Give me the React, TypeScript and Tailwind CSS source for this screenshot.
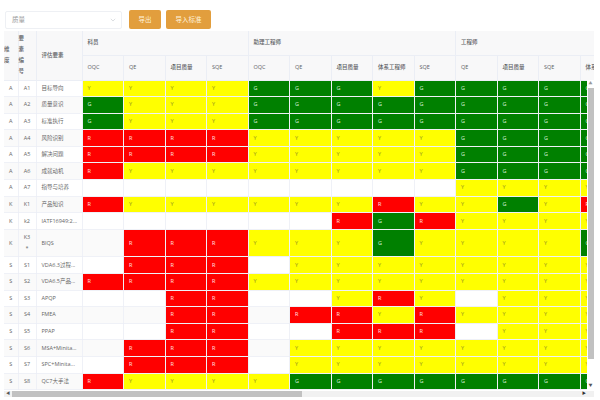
const groups = [
  { name: "科员", cols: ["OQC", "QE", "项目质量", "SQE"] },
  { name: "助理工程师", cols: ["OQC", "QE", "项目质量", "体系工程师", "SQE"] },
  { name: "工程师", cols: ["QE", "项目质量", "SQE", "体系工程师"] },
];

const rows: [string, string, string, string][] = [
  ["A", "A1", "目标导向", "YYYYGGGYGGGGG"],
  ["A", "A2", "质量意识", "GYYYGGGGGGGGG"],
  ["A", "A3", "标准执行", "GYYYGGGGGGGGG"],
  ["A", "A4", "风险识别", "RRRRYYYYYGGGG"],
  ["A", "A5", "解决问题", "RRRRYYYYYGGGG"],
  ["A", "A6", "成就动机", "RYYYYYYYYGGGG"],
  ["A", "A7", "指导与培养", "---------YYYY"],
  ["K", "K1", "产品知识", "RYYYYYYRYYGYR"],
  ["K", "k2", "IATF16949:2...", "------RGRYYYY"],
  ["K", "K3 *", "BIQS", "-RRRYYYGYYYYG"],
  ["S", "S1", "VDA6.3过程...", "-RRR-YYYYYYYY"],
  ["S", "S2", "VDA6.5产品...", "RRRRYYYYYYYYY"],
  ["S", "S3", "APQP", "--RR--YRY-YYY"],
  ["S", "S4", "FMEA", "--RR-RRYRYYYY"],
  ["S", "S5", "PPAP", "--RR--RRR-YYY"],
  ["S", "S6", "MSA+Minita...", "-RRR-YYYYYYYY"],
  ["S", "S7", "SPC+Minita...", "-RRR-YYYYYYYY"],
  ["S", "S8", "QC7大手法", "RYYYYGGGGGGGG"],
];

function cellClass(v: string, i: number) {
  if (v === "R") return "bg-[#ff0000] text-[#ffe0e0]";
  if (v === "G") return "bg-[#008000] text-[#d8efd8]";
  if (v === "Y") return "bg-[#ffff00] text-[#8f8f20]";
  return i % 2 === 1 ? "bg-[#fafafa]" : "bg-white";
}

const th = "border-r border-b border-[#ebeef5] bg-[#f8f8f9] text-left align-middle font-medium text-[#606266] p-0";
const td = "border-r border-b border-[#ebeef5]/80 p-0 pl-[5px] overflow-hidden whitespace-nowrap";

export default function App() {
  return (
    <div className="w-[600px] h-[400px] overflow-hidden bg-white text-[5.5px] leading-[11px] text-[#666] font-['Open_Sans','Noto_Sans_CJK_SC',sans-serif]">
      <div className="flex items-center gap-[5px] pl-[5px] pt-[8px] h-[31px]">
        <div className="flex items-center justify-between w-[117px] h-[18px] border border-[#eef0f4] rounded-[2px] pl-[6px] pr-[5px] text-[6.5px] text-[#999]">
          <span>质量</span>
          <svg width="6" height="4" viewBox="0 0 7 5" fill="none" stroke="#c8ccd2" strokeWidth="0.8"><path d="M0.8 1 L3.5 3.8 L6.2 1" /></svg>
        </div>
        <div className="flex items-center justify-center w-[32px] h-[19px] ml-[2px] rounded-[2px] bg-[#e29e3d] text-[6.5px] text-[#fff3dc]">导出</div>
        <div className="flex items-center justify-center w-[45px] h-[19px] rounded-[2px] bg-[#e29e3d] text-[6.5px] text-[#fff3dc]">导入标准</div>
      </div>
      <div className="relative ml-[4px] w-[590px] h-[366px] overflow-hidden">
        <table className="table-fixed border-collapse w-[617.5px]">
          <colgroup>
            <col className="w-[14px]" />
            <col className="w-[18px]" />
            <col className="w-[46px]" />
            {Array.from({ length: 13 }).map((_, i) => (
              <col key={i} className="w-[41.5px]" />
            ))}
          </colgroup>
          <thead>
            <tr className="h-[24px]">
              <th rowSpan={2} className={`${th} text-center`}>维<br />度</th>
              <th rowSpan={2} className={`${th} text-center`}>要<br />素<br />编<br />号</th>
              <th rowSpan={2} className={`${th} pl-[5px]`}>评估要素</th>
              {groups.map((g) => (
                <th key={g.name} colSpan={g.cols.length} className={`${th} pl-[5px]`}>{g.name}</th>
              ))}
            </tr>
            <tr className="h-[25px]">
              {groups.flatMap((g) =>
                g.cols.map((c, i) => (
                  <th key={g.name + i} className={`${th} pl-[5px] whitespace-nowrap overflow-hidden`}>{c}</th>
                ))
              )}
            </tr>
          </thead>
          <tbody>
            {rows.map((r, i) => (
              <tr key={r[1]} className={r[1] === "K3 *" ? "h-[27.5px]" : "h-[16.6px]"}>
                <td className={`${td} text-center !pl-0 ${i % 2 ? "bg-[#fafafa]" : "bg-white"}`}>{r[0]}</td>
                <td className={`${td} text-center !pl-0 ${i % 2 ? "bg-[#fafafa]" : "bg-white"}`}>
                  {r[1] === "K3 *" ? <>K3<br />*</> : r[1]}
                </td>
                <td className={`${td} ${i % 2 ? "bg-[#fafafa]" : "bg-white"}`}>{r[2]}</td>
                {r[3].split("").map((v, j) => (
                  <td key={j} className={`${td} ${cellClass(v, i)}`}>{v === "-" ? "" : v}</td>
                ))}
              </tr>
            ))}
          </tbody>
        </table>
        <div className="absolute left-[583px] top-[49px] w-[7px] h-[311px] bg-white flex flex-col items-center">
          <div className="w-[6px] h-[8px] flex items-center justify-center text-[4px] leading-none text-[#999]">▲</div>
          <div className="w-[6px] h-[271px] bg-[#c1c1c1]" />
          <div className="mt-auto mb-[1px] w-[6px] h-[8px] flex items-center justify-center text-[4px] leading-none text-[#555]">▼</div>
        </div>
        <div className="absolute left-0 top-[360px] w-[590px] h-[6px] bg-[#f1f1f1] flex items-center">
          <div className="w-[8px] text-[4px] leading-none text-center text-[#555]">◀</div>
          <div className="w-[290px] h-[6px] bg-[#c1c1c1]" />
          <div className="ml-auto mr-[7px] w-[6px] text-[4px] leading-none text-center text-[#333]">▶</div>
        </div>
      </div>
    </div>
  );
}
